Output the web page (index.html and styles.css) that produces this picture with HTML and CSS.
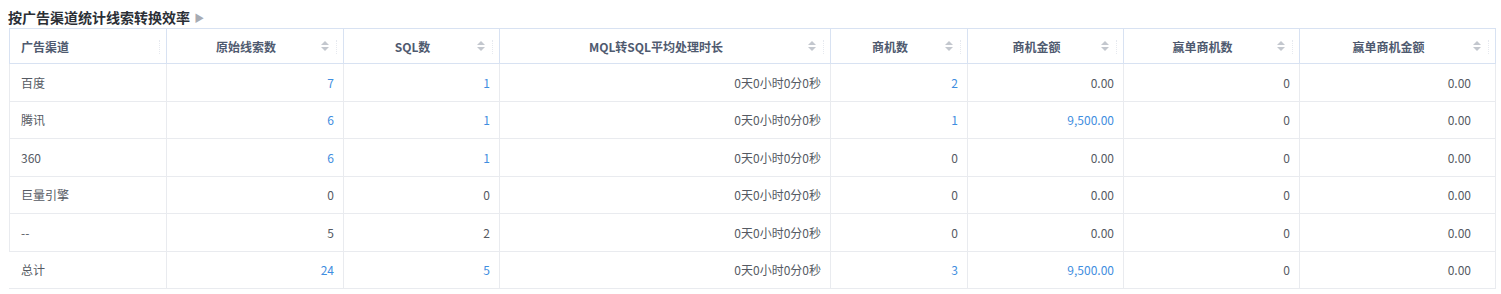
FILE: index.html
```html
<!DOCTYPE html>
<html lang="zh">
<head>
<meta charset="utf-8">
<link rel="stylesheet" href="styles.css">
</head>
<body>
<div class="panel">
  <div class="title">按广告渠道统计线索转换效率 <span class="caret">&#9654;</span></div>
  <table class="grid">
    <colgroup>
      <col style="width:157px"><col style="width:177px"><col style="width:156px"><col style="width:331px">
      <col style="width:137px"><col style="width:156px"><col style="width:176px"><col style="width:196px">
    </colgroup>
    <thead>
      <tr>
        <th class="first"><span class="lbl">广告渠道</span><span class="rz"></span></th>
        <th><span class="lbl">原始线索数</span><span class="sort"><i class="up"></i><i class="down"></i></span><span class="rz"></span></th>
        <th><span class="lbl">SQL数</span><span class="sort"><i class="up"></i><i class="down"></i></span><span class="rz"></span></th>
        <th><span class="lbl">MQL转SQL平均处理时长</span><span class="sort"><i class="up"></i><i class="down"></i></span><span class="rz"></span></th>
        <th><span class="lbl">商机数</span><span class="sort"><i class="up"></i><i class="down"></i></span><span class="rz"></span></th>
        <th><span class="lbl">商机金额</span><span class="sort"><i class="up"></i><i class="down"></i></span><span class="rz"></span></th>
        <th><span class="lbl">赢单商机数</span><span class="sort"><i class="up"></i><i class="down"></i></span><span class="rz"></span></th>
        <th><span class="lbl">赢单商机金额</span><span class="sort"><i class="up"></i><i class="down"></i></span><span class="rz"></span></th>
      </tr>
    </thead>
    <tbody>
      <tr>
        <td class="first">百度</td><td><a>7</a></td><td><a>1</a></td><td>0天0小时0分0秒</td><td><a>2</a></td><td>0.00</td><td>0</td><td class="last">0.00</td>
      </tr>
      <tr>
        <td class="first">腾讯</td><td><a>6</a></td><td><a>1</a></td><td>0天0小时0分0秒</td><td><a>1</a></td><td><a>9,500.00</a></td><td>0</td><td class="last">0.00</td>
      </tr>
      <tr>
        <td class="first">360</td><td><a>6</a></td><td><a>1</a></td><td>0天0小时0分0秒</td><td>0</td><td>0.00</td><td>0</td><td class="last">0.00</td>
      </tr>
      <tr>
        <td class="first">巨量引擎</td><td>0</td><td>0</td><td>0天0小时0分0秒</td><td>0</td><td>0.00</td><td>0</td><td class="last">0.00</td>
      </tr>
      <tr>
        <td class="first">--</td><td>5</td><td>2</td><td>0天0小时0分0秒</td><td>0</td><td>0.00</td><td>0</td><td class="last">0.00</td>
      </tr>
    </tbody>
    <tfoot>
      <tr>
        <td class="first">总计</td><td><a>24</a></td><td><a>5</a></td><td>0天0小时0分0秒</td><td><a>3</a></td><td><a>9,500.00</a></td><td>0</td><td class="last">0.00</td>
      </tr>
    </tfoot>
  </table>
</div>
</body>
</html>
```

FILE: styles.css
```css
html, body {
  margin: 0;
  padding: 0;
  background: #ffffff;
}

body {
  font-family: "Noto Sans CJK SC", "Noto Sans", sans-serif;
  font-size: 12px;
  color: #555a63;
}

.panel {
  padding: 6px 6px 0 9px;
}

.title {
  font-size: 14px;
  font-weight: bold;
  color: #2b2f36;
  height: 22px;
  line-height: 22px;
  margin-left: -1px;
}

.caret {
  font-size: 10px;
  color: #a7abb3;
  vertical-align: 1px;
  margin-left: 1px;
  font-weight: normal;
}

.grid {
  border-collapse: collapse;
  table-layout: fixed;
  width: 1486px;
}

.grid th {
  position: relative;
  height: 34px;
  padding: 0 30px 0 12px;
  border: 1px solid #d8e2f2;
  font-weight: bold;
  color: #4f5a6f;
  text-align: center;
  white-space: nowrap;
}

.grid th.first {
  text-align: left;
  padding-left: 11px;
}

.grid th .lbl {
  display: inline-block;
}

.sort {
  position: absolute;
  right: 14px;
  top: 50%;
  margin-top: -6px;
  width: 9px;
  height: 12px;
  display: flex;
  flex-direction: column;
  align-items: center;
  justify-content: center;
  gap: 2px;
}

.sort i {
  display: block;
  width: 0;
  height: 0;
  border-left: 4px solid transparent;
  border-right: 4px solid transparent;
}

.sort .up {
  border-bottom: 4px solid #c3c7ce;
}

.sort .down {
  border-top: 4px solid #c3c7ce;
}

.rz {
  position: absolute;
  right: 5px;
  top: 11px;
  width: 1px;
  height: 14px;
  border-left: 1px dotted #e6e9ef;
}

.grid td {
  height: 36.5px;
  padding: 0 9px 0 12px;
  border: 1px solid #e9ebef;
  text-align: right;
  white-space: nowrap;
}

.grid td.first {
  text-align: left;
  padding-left: 11px;
}

.grid td.last {
  padding-right: 24px;
}

.grid tfoot td {
  border-top: 1px solid #e3e5ea;
}

.grid tfoot td.first {
  border-left-color: transparent;
}

.grid a {
  color: #3f8ee0;
  text-decoration: none;
}
```
